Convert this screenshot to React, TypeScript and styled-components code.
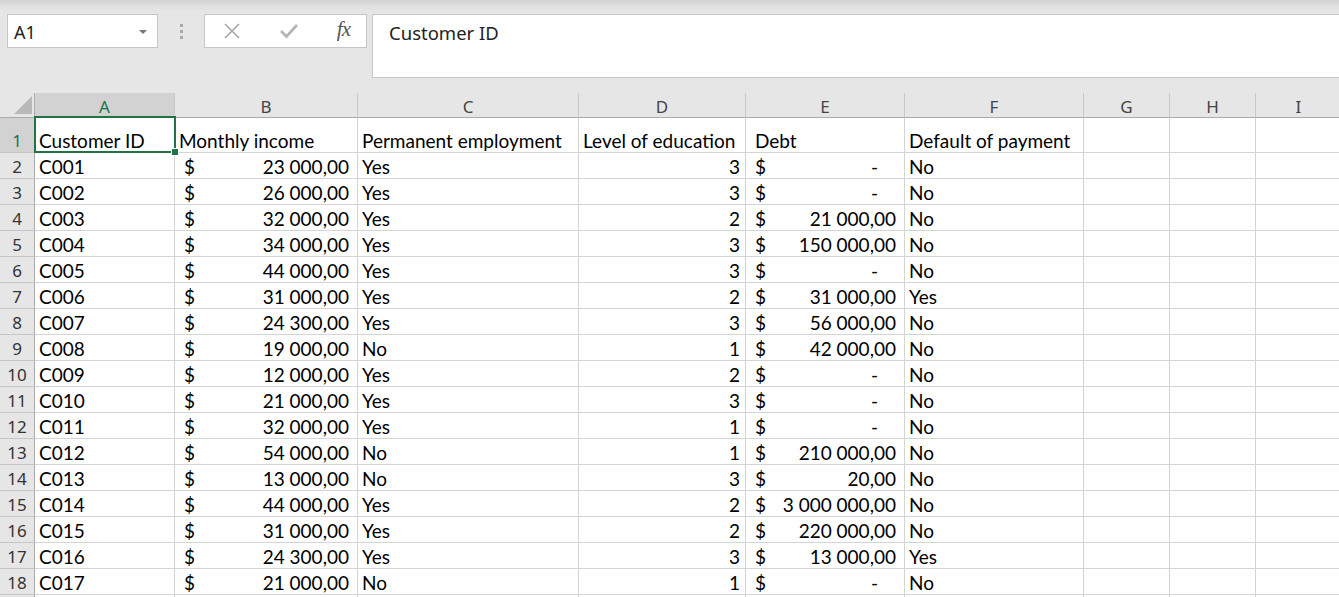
import React from 'react'
import styled, { createGlobalStyle } from 'styled-components'

const GlobalStyle = createGlobalStyle`
  html, body {
    margin: 0;
    padding: 0;
    background: #e6e6e6;
    overflow: hidden;
  }
`

const uiFont = `"Noto Sans", "Open Sans", "DejaVu Sans", sans-serif`
const cellFont = `Lato, "Liberation Sans", sans-serif`
const green = '#217346'

const Page = styled.div`
  width: 1339px;
  height: 597px;
  overflow: hidden;
  background: #e6e6e6;
`

const Toolbar = styled.div`
  height: 93px;
  box-sizing: border-box;
  padding: 14px 0 0 7px;
  display: flex;
  align-items: flex-start;
  background: linear-gradient(to bottom, #d2d2d2 0px, #e0e0e0 6px, #e6e6e6 12px);
`

const NameBox = styled.div`
  width: 151px;
  height: 34px;
  box-sizing: border-box;
  border: 1px solid #c6c6c6;
  background: #fff;
  display: flex;
  align-items: center;
  justify-content: space-between;
  padding: 1px 10px 0 6px;
  font-family: ${uiFont};
  font-size: 18px;
  color: #222;
`

const DropArrow = styled.span`
  width: 0;
  height: 0;
  border-left: 4px solid transparent;
  border-right: 4px solid transparent;
  border-top: 4px solid #777;
`

const Grip = styled.div`
  width: 46px;
  height: 34px;
  display: flex;
  flex-direction: column;
  align-items: center;
  justify-content: center;
  gap: 3px;

  i {
    width: 3px;
    height: 3px;
    background: #a8a8a8;
  }
`

const ButtonBox = styled.div`
  width: 163px;
  height: 34px;
  box-sizing: border-box;
  border: 1px solid #c6c6c6;
  background: #fff;
  display: flex;
  align-items: center;
  justify-content: space-between;
  padding: 0 16px 0 18px;
`

const Fx = styled.span`
  font-family: "Liberation Serif", serif;
  font-style: italic;
  font-size: 21px;
  color: #555;
  letter-spacing: -1px;
  margin-top: -3px;
`

const FormulaBox = styled.div`
  flex: 1;
  margin-left: 5px;
  height: 64px;
  box-sizing: border-box;
  border: 1px solid #c6c6c6;
  border-right: none;
  background: #fff;
  padding: 5px 0 0 16px;
  font-family: ${uiFont};
  font-size: 18.5px;
  color: #222;
`

const Sheet = styled.div`
  display: grid;
  grid-template-columns: 35px 140px 183px 221px 167px 159px 179px 86px 86px 86px;
  grid-template-rows: 25px 35px repeat(18, 26px);
  background: #fff;
`

const Corner = styled.div`
  background: #e6e6e6;
  border-right: 1px solid #ababab;
  border-bottom: 1px solid #ababab;
  box-sizing: border-box;
  display: flex;
  align-items: flex-end;
  justify-content: flex-end;
  padding: 0 2px 3px 0;
`

const ColHead = styled.div<{ $active?: boolean }>`
  box-sizing: border-box;
  background: ${p => (p.$active ? '#d2d2d2' : '#e6e6e6')};
  border-right: 1px solid #c8c8c8;
  border-bottom: 1px solid ${p => (p.$active ? green : '#ababab')};
  display: flex;
  align-items: center;
  justify-content: center;
  font-family: ${uiFont};
  font-size: 17px;
  color: ${p => (p.$active ? green : '#444')};
  padding-top: 3px;
`

const RowHead = styled.div<{ $active?: boolean }>`
  box-sizing: border-box;
  background: ${p => (p.$active ? '#d2d2d2' : '#e6e6e6')};
  border-right: 1px solid ${p => (p.$active ? green : '#ababab')};
  border-bottom: 1px solid #c6c6c6;
  display: flex;
  align-items: flex-end;
  justify-content: center;
  padding-bottom: 0;
  font-family: ${uiFont};
  font-size: 17px;
  line-height: 22px;
  color: ${p => (p.$active ? green : '#333')};
`

const Cell = styled.div<{ $align?: 'left' | 'right'; $pad?: number; $selected?: boolean }>`
  position: relative;
  box-sizing: border-box;
  border-right: 1px solid #d4d4d4;
  border-bottom: 1px solid #d4d4d4;
  display: flex;
  align-items: flex-end;
  justify-content: ${p => (p.$align === 'right' ? 'flex-end' : 'flex-start')};
  padding: 0 ${p => (p.$align === 'right' ? 5 : 0)}px 0 ${p => p.$pad ?? 4}px;
  font-family: ${cellFont};
  font-size: 19px;
  line-height: 22px;
  color: #000;
  white-space: nowrap;
  overflow: visible;

  ${p =>
    p.$selected &&
    `
    z-index: 2;
    &::after {
      content: '';
      position: absolute;
      top: -2px;
      left: -1px;
      right: -2px;
      bottom: -1px;
      border: 2px solid ${green};
    }
    &::before {
      content: '';
      position: absolute;
      right: -5px;
      bottom: -4px;
      width: 6px;
      height: 6px;
      background: ${green};
      border: 1px solid #fff;
      z-index: 3;
    }
  `}
`

const Money = styled.div`
  box-sizing: border-box;
  border-right: 1px solid #d4d4d4;
  border-bottom: 1px solid #d4d4d4;
  display: flex;
  align-items: flex-end;
  justify-content: space-between;
  padding: 0 8px 0 9px;
  font-family: ${cellFont};
  font-size: 19px;
  line-height: 22px;
  color: #000;
  white-space: nowrap;
`

const Dash = styled.span`
  margin-right: 18px;
`

const columns = ['A', 'B', 'C', 'D', 'E', 'F', 'G', 'H', 'I']

type Row = [string, string, string, number, string, string]

const rows: Row[] = [
  ['C001', '23 000,00', 'Yes', 3, '', 'No'],
  ['C002', '26 000,00', 'Yes', 3, '', 'No'],
  ['C003', '32 000,00', 'Yes', 2, '21 000,00', 'No'],
  ['C004', '34 000,00', 'Yes', 3, '150 000,00', 'No'],
  ['C005', '44 000,00', 'Yes', 3, '', 'No'],
  ['C006', '31 000,00', 'Yes', 2, '31 000,00', 'Yes'],
  ['C007', '24 300,00', 'Yes', 3, '56 000,00', 'No'],
  ['C008', '19 000,00', 'No', 1, '42 000,00', 'No'],
  ['C009', '12 000,00', 'Yes', 2, '', 'No'],
  ['C010', '21 000,00', 'Yes', 3, '', 'No'],
  ['C011', '32 000,00', 'Yes', 1, '', 'No'],
  ['C012', '54 000,00', 'No', 1, '210 000,00', 'No'],
  ['C013', '13 000,00', 'No', 3, '20,00', 'No'],
  ['C014', '44 000,00', 'Yes', 2, '3 000 000,00', 'No'],
  ['C015', '31 000,00', 'Yes', 2, '220 000,00', 'No'],
  ['C016', '24 300,00', 'Yes', 3, '13 000,00', 'Yes'],
  ['C017', '21 000,00', 'No', 1, '', 'No'],
]

const Amount = ({ value }: { value: string }) => (
  <Money>
    <span>$</span>
    {value ? <span>{value}</span> : <Dash>-</Dash>}
  </Money>
)

const CancelIcon = () => (
  <svg width="18" height="18" viewBox="0 0 18 18">
    <path d="M2 2 L16 16 M16 2 L2 16" stroke="#a6a6a6" strokeWidth="1.6" fill="none" />
  </svg>
)

const EnterIcon = () => (
  <svg width="20" height="18" viewBox="0 0 20 18">
    <path d="M2 9 L7.5 14.5 L18 3" stroke="#b4b4b4" strokeWidth="2.6" fill="none" />
  </svg>
)

const CornerTriangle = () => (
  <svg width="18" height="18" viewBox="0 0 18 18">
    <path d="M18 0 L18 18 L0 18 Z" fill="#b9b9b9" />
  </svg>
)

const App = () => {
  return (
    <Page>
      <GlobalStyle />
      <Toolbar>
        <NameBox>
          A1
          <DropArrow />
        </NameBox>
        <Grip>
          <i />
          <i />
          <i />
        </Grip>
        <ButtonBox>
          <CancelIcon />
          <EnterIcon />
          <Fx>fx</Fx>
        </ButtonBox>
        <FormulaBox>Customer ID</FormulaBox>
      </Toolbar>
      <Sheet>
        <Corner>
          <CornerTriangle />
        </Corner>
        {columns.map(c => (
          <ColHead key={c} $active={c === 'A'}>
            {c}
          </ColHead>
        ))}

        <RowHead $active>1</RowHead>
        <Cell $selected>Customer ID</Cell>
        <Cell>Monthly income</Cell>
        <Cell>Permanent employment</Cell>
        <Cell>Level of education</Cell>
        <Cell $pad={9}>Debt</Cell>
        <Cell>Default of payment</Cell>
        <Cell />
        <Cell />
        <Cell />

        {rows.map((r, i) => (
          <React.Fragment key={r[0]}>
            <RowHead>{i + 2}</RowHead>
            <Cell>{r[0]}</Cell>
            <Amount value={r[1]} />
            <Cell>{r[2]}</Cell>
            <Cell $align="right">{r[3]}</Cell>
            <Amount value={r[4]} />
            <Cell>{r[5]}</Cell>
            <Cell />
            <Cell />
            <Cell />
          </React.Fragment>
        ))}
        <RowHead />
        {columns.map(c => (
          <Cell key={c} />
        ))}
      </Sheet>
    </Page>
  )
}

export default App
